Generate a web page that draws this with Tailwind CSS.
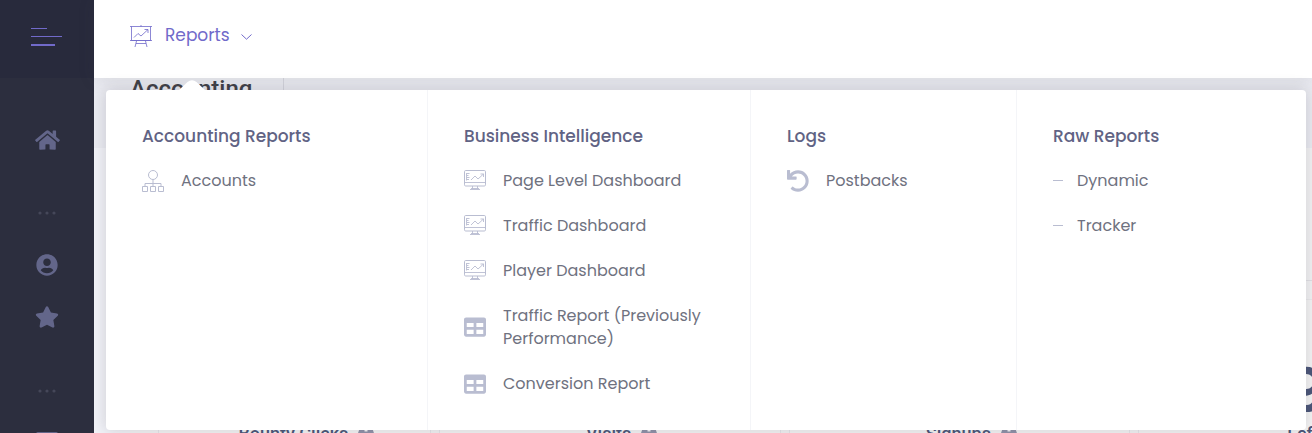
<!DOCTYPE html>
<html lang="en">
<head>
    <meta charset="UTF-8">
    <title>Accounting</title>
    <meta name="viewport" content="width=device-width, initial-scale=1.0">
    <script src="https://cdn.jsdelivr.net/npm/@tailwindcss/browser@4"></script>
</head>
<body class="flex h-screen overflow-hidden bg-[#f2f3f8] font-['Poppins','Inter',sans-serif] text-[16px] text-[#6f727f]">

    <!-- Icon sprite -->
    <svg class="hidden">
        <symbol id="monitor" viewBox="0 0 22 22">
            <g fill="none" stroke="currentColor">
                <rect x=".5" y=".5" width="21" height="15.5" rx="1.2"/>
                <path d="M.5 12.500h21M8.500 16v3M13.500 16v3M6 19.500h10M7 18.500h8" stroke-opacity=".9"/>
                <path d="M2.500 3v7.500M3 3.500h2.500M3 5.500h1.500M3 7.500h2.500M3 9.500h2M7 10l4-4 3 3 5.500-5M16.500 4h3v3" stroke-opacity=".9"/>
            </g>
        </symbol>
        <symbol id="table" viewBox="0 0 512 512">
            <path fill="currentColor" d="M464 32H48C21.490 32 0 53.490 0 80v352c0 26.510 21.490 48 48 48h416c26.510 0 48-21.490 48-48V80c0-26.510-21.490-48-48-48zM224 416H64v-96h160v96zm0-160H64v-96h160v96zm224 160H288v-96h160v96zm0-160H288v-96h160v96z"/>
        </symbol>
        <symbol id="info" viewBox="0 0 16 16">
            <path fill="currentColor" fill-rule="evenodd" d="M8 0a8 8 0 1 0 0 16A8 8 0 0 0 8 0zM6.500 2.500h3v3h-3zM6.500 7h3v6h-3z"/>
        </symbol>
    </svg>

    <!-- Sidebar -->
    <aside class="w-[94px] shrink-0 bg-[#2c2e3e] text-[#63668a]">
        <button type="button" aria-label="Toggle menu" class="flex h-[78px] w-full flex-col items-start justify-center gap-[7px] bg-[#282a3c] pb-1 pl-[31px]">
            <span class="h-px w-4 bg-[#716aca]"></span>
            <span class="h-px w-[31px] bg-[#716aca]"></span>
            <span class="h-[2px] w-6 bg-[#716aca]"></span>
        </button>
        <nav class="flex flex-col items-center pt-9">
            <a href="#" aria-label="Home" class="flex h-[52px] items-center">
                <svg class="h-[22px] w-[25px]" viewBox="0 0 576 512" fill="currentColor"><path d="M280.370 148.260L96 300.110V464a16 16 0 0 0 16 16l112.060-.29a16 16 0 0 0 15.920-16V368a16 16 0 0 1 16-16h64a16 16 0 0 1 16 16v95.640a16 16 0 0 0 16 16.050L464 480a16 16 0 0 0 16-16V300L295.670 148.260a12.190 12.190 0 0 0-15.300 0zM571.600 251.470L488 182.560V44.050a12 12 0 0 0-12-12h-56a12 12 0 0 0-12 12v72.610L318.470 43a48 48 0 0 0-61 0L4.340 251.470a12 12 0 0 0-1.600 16.900l25.500 31A12 12 0 0 0 45.150 301l235.220-193.740a12.190 12.190 0 0 1 15.300 0L530.900 301a12 12 0 0 0 16.900-1.600l25.500-31a12 12 0 0 0-1.700-16.930z"/></svg>
            </a>
            <svg class="my-[45px] h-1 w-[18px] text-[#454759]" viewBox="0 0 18 4" fill="currentColor"><circle cx="2" cy="2" r="1.600"/><circle cx="9" cy="2" r="1.600"/><circle cx="16" cy="2" r="1.600"/></svg>
            <a href="#" aria-label="Account" class="-mt-[21px] flex h-[52px] items-center">
                <svg class="size-[22px]" viewBox="0 0 496 512" fill="currentColor"><path d="M248 8C111 8 0 119 0 256s111 248 248 248 248-111 248-248S385 8 248 8zm0 96c48.600 0 88 39.400 88 88s-39.400 88-88 88-88-39.400-88-88 39.400-88 88-88zm0 344c-58.700 0-111.300-26.600-146.500-68.200 18.800-35.400 55.600-59.800 98.500-59.800 2.400 0 4.800.4 7.100 1.100 13 4.200 26.600 6.900 40.900 6.900 14.300 0 28-2.700 40.900-6.900 2.300-.7 4.700-1.100 7.100-1.100 42.900 0 79.700 24.400 98.500 59.800C359.300 421.400 306.700 448 248 448z"/></svg>
            </a>
            <a href="#" aria-label="Favorites" class="flex h-[52px] items-center">
                <svg class="h-[22px] w-6" viewBox="0 0 576 512" fill="currentColor"><path d="M259.300 17.800L194 150.200 47.900 171.500c-26.200 3.800-36.700 36.100-17.700 54.600l105.700 103-25 145.500c-4.500 26.300 23.200 46 46.400 33.700L288 439.600l130.700 68.700c23.200 12.200 50.900-7.400 46.400-33.700l-25-145.500 105.700-103c19-18.500 8.500-50.800-17.700-54.600L382 150.200 316.700 17.800c-11.700-23.600-45.600-23.900-57.400 0z"/></svg>
            </a>
            <svg class="mt-[46px] h-1 w-[18px] text-[#454759]" viewBox="0 0 18 4" fill="currentColor"><circle cx="2" cy="2" r="1.600"/><circle cx="9" cy="2" r="1.600"/><circle cx="16" cy="2" r="1.600"/></svg>
            <a href="#" aria-label="Reports" class="mt-[39px]">
                <svg class="size-[22px]" viewBox="0 0 22 22" fill="currentColor"><rect width="22" height="22" rx="2"/></svg>
            </a>
        </nav>
    </aside>

    <div class="flex min-w-0 flex-1 flex-col">
        <!-- Header -->
        <header class="relative z-10 h-[78px] shrink-0 bg-white pl-9 shadow-[0_1px_15px_1px_rgba(69,65,78,0.1)]">
            <button type="button" aria-expanded="true" class="flex h-[72px] items-center text-[17px] text-[#716aca]">
                <svg class="size-[22px]" viewBox="0 0 22 22" fill="none" stroke="currentColor" stroke-opacity=".8"><path d="M0 1.500h22M1.500 1.500v14h19v-14M0 15.500h22M11 0v1.500M6.500 16l-1.500 6M15.500 16l1.500 6M6 18.500h10M4 12.500l4-4 3 2.500 7-6.500M14.500 4.500H18V8"/></svg>
                <span class="ml-[13px]">Reports</span>
                <svg class="ml-[11px] mt-[2px] h-[6px] w-[11px]" viewBox="0 0 11 6" fill="none" stroke="currentColor"><path d="M.5.5l5 4.700 5-4.700"/></svg>
            </button>

            <!-- Mega menu -->
            <div class="absolute left-3 right-[6px] top-[90px] rounded-[4px] bg-white shadow-[0_0_15px_1px_rgba(69,65,78,0.2)]">
                <svg class="absolute -top-[10px] left-[73px] h-[10px] w-[26px] text-white" viewBox="0 0 26 10" fill="currentColor"><path d="M0 10L8.500 2Q13-1.500 17.500 2L26 10z"/></svg>
                <div class="grid grid-cols-[322fr_323fr_266fr_289fr] divide-x divide-[#f4f5f8] leading-[23px]">
                    <section class="px-9 pb-6 pt-[34px]">
                        <h3 class="mb-[10px] text-[17px] font-medium leading-6 text-[#616384]">Accounting Reports</h3>
                        <a href="#" class="flex items-center gap-[17px] py-[11px]">
                            <svg class="size-[22px] shrink-0 text-[#b9bdd1]" viewBox="0 0 22 22" fill="none" stroke="currentColor"><circle cx="11" cy="5" r="4.500"/><path d="M11 9.500v7M3 16.500v-3h16v3M.5 16.500h5v5h-5zM8.500 16.500h5v5h-5zM16.500 16.500h5v5h-5z"/></svg>
                            <span>Accounts</span>
                        </a>
                    </section>
                    <section class="px-9 pb-6 pt-[34px]">
                        <h3 class="mb-[10px] text-[17px] font-medium leading-6 text-[#616384]">Business Intelligence</h3>
                        <a href="#" class="flex items-center gap-[17px] py-[11px]">
                            <svg class="size-[22px] shrink-0 text-[#b9bdd1]"><use href="#monitor"/></svg>
                            <span>Page Level Dashboard</span>
                        </a>
                        <a href="#" class="flex items-center gap-[17px] py-[11px]">
                            <svg class="size-[22px] shrink-0 text-[#b9bdd1]"><use href="#monitor"/></svg>
                            <span>Traffic Dashboard</span>
                        </a>
                        <a href="#" class="flex items-center gap-[17px] py-[11px]">
                            <svg class="size-[22px] shrink-0 text-[#b9bdd1]"><use href="#monitor"/></svg>
                            <span>Player Dashboard</span>
                        </a>
                        <a href="#" class="flex items-center gap-[17px] py-[11px]">
                            <svg class="size-[22px] shrink-0 text-[#b9bdd1]"><use href="#table"/></svg>
                            <span>Traffic Report (Previously Performance)</span>
                        </a>
                        <a href="#" class="flex items-center gap-[17px] py-[11px]">
                            <svg class="size-[22px] shrink-0 text-[#b9bdd1]"><use href="#table"/></svg>
                            <span>Conversion Report</span>
                        </a>
                    </section>
                    <section class="px-9 pb-6 pt-[34px]">
                        <h3 class="mb-[10px] text-[17px] font-medium leading-6 text-[#616384]">Logs</h3>
                        <a href="#" class="flex items-center gap-[17px] py-[11px]">
                            <svg class="size-[22px] shrink-0 text-[#b9bdd1]" viewBox="0 0 512 512" fill="currentColor"><path d="M212.333 224.333H12c-6.627 0-12-5.373-12-12V12C0 5.373 5.373 0 12 0h48c6.627 0 12 5.373 12 12v78.112C117.773 39.279 184.260 7.470 258.175 8.007c136.906.994 246.448 111.623 246.157 248.532C504.041 393.258 393.120 504 256.333 504c-64.089 0-122.496-24.313-166.510-64.215-5.099-4.622-5.334-12.554-.467-17.420l33.967-33.967c4.474-4.474 11.662-4.717 16.401-.525C170.760 415.336 211.580 432 256.333 432c97.268 0 176-78.716 176-176 0-97.267-78.716-176-176-176-58.496 0-110.280 28.476-142.274 72.333h98.274c6.627 0 12 5.373 12 12v48c0 6.627-5.373 12-12 12z"/></svg>
                            <span>Postbacks</span>
                        </a>
                    </section>
                    <section class="px-9 pb-6 pt-[34px]">
                        <h3 class="mb-[10px] text-[17px] font-medium leading-6 text-[#616384]">Raw Reports</h3>
                        <a href="#" class="flex items-center gap-[14px] py-[11px]">
                            <span class="h-px w-[10px] bg-[#b9bdd1]"></span>
                            <span>Dynamic</span>
                        </a>
                        <a href="#" class="flex items-center gap-[14px] py-[11px]">
                            <span class="h-px w-[10px] bg-[#b9bdd1]"></span>
                            <span>Tracker</span>
                        </a>
                    </section>
                </div>
            </div>
        </header>

        <!-- Page content -->
        <main class="flex-1 overflow-hidden font-['Roboto',sans-serif]">
            <div class="flex h-[70px] items-start bg-[#ebecf2] pl-9">
                <h1 class="w-[154px] border-r border-[#d5d6de] text-[24px] font-medium leading-[23px] text-[#3f4047]">Accounting</h1>
            </div>
            <div class="-mr-[168px] ml-9 bg-[#f4f4f5]">
                <div class="h-[133px] border-b border-[#e2e2e6]"></div>
                <div class="h-[19px] border-b border-[#ebebed]"></div>
                <div class="grid grid-cols-[273fr_342fr_342fr_342fr] gap-2 pl-7 text-[18px] font-medium text-[#4a5578]">
                    <div class="flex h-40 items-end justify-center gap-[10px] border-x border-[#e6e6ea] bg-[#f6f6f6] pb-[14px] pl-6 leading-[25px]">Bounty Clicks <svg class="mb-1 size-4 text-[#9092a9]"><use href="#info"/></svg></div>
                    <div class="flex h-40 items-end justify-center gap-[10px] border-x border-[#e6e6ea] bg-[#f6f6f6] pb-[14px] pl-6 leading-[25px]">Visits <svg class="mb-1 size-4 text-[#9092a9]"><use href="#info"/></svg></div>
                    <div class="flex h-40 items-end justify-center gap-[10px] border-x border-[#e6e6ea] bg-[#f6f6f6] pb-[14px] pl-6 leading-[25px]">Signups <svg class="mb-1 size-4 text-[#9092a9]"><use href="#info"/></svg></div>
                    <div class="flex h-40 flex-col justify-end border-x border-[#e6e6ea] bg-[#f6f6f6] pb-[14px] pl-[148px] leading-[25px]">
                        <strong class="font-['Poppins',sans-serif] text-[60px] font-semibold leading-[60px]">9</strong>
                        <span>Left</span>
                    </div>
                </div>
            </div>
        </main>
    </div>

</body>
</html>
